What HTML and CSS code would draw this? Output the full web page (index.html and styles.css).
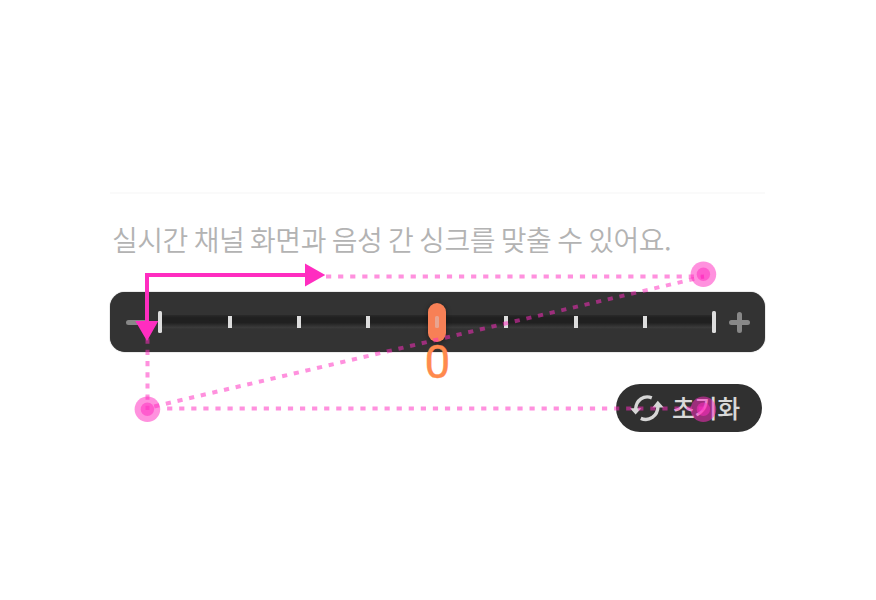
FILE: index.html
```html
<!DOCTYPE html>
<html lang="ko">
<head>
<meta charset="utf-8">
<title>싱크 조절</title>
<link rel="stylesheet" href="styles.css">
</head>
<body>
<main class="sync">
  <p class="desc">실시간 채널 화면과 음성 간 싱크를 맞출 수 있어요.</p>
  <div class="panel">
    <span class="minus"></span>
    <div class="track">
      <i class="tick end"></i><i class="tick"></i><i class="tick"></i><i class="tick"></i>
      <span class="handle"><i class="tick"></i></span>
      <i class="tick"></i><i class="tick"></i><i class="tick"></i><i class="tick end"></i>
    </div>
    <svg class="plus" width="21" height="21" viewBox="0 0 21 21" stroke="#888" stroke-width="5" stroke-linecap="round">
      <path d="M10.5 2.5V18.5M2.5 10.5H18.5"/>
    </svg>
  </div>
  <div class="value">0</div>
  <button class="reset">
    <svg width="34" height="28" viewBox="0 0 34 28" fill="none" stroke="#d6d6d6" stroke-width="3.4">
      <path d="M21.8 3.8C13.8 0.8 6.2 6 5.6 15"/>
      <path d="M10.8 24.4C19 28 27.6 22.2 28 12.5"/>
      <path d="M0 14.2H11.4L5.6 20.6Z M22.4 13.4L27.8 6.8L33.8 13.4Z" fill="#d6d6d6" stroke="none"/>
    </svg>
    <span>초기화</span>
  </button>
</main>
<svg class="flow" width="876" height="600" viewBox="0 0 876 600" fill="none">
  <g stroke="#ff2dc0" stroke-opacity=".52" stroke-width="4">
    <path d="M326 276.5H704" stroke-dasharray="5.2 6.89"/>
    <path d="M147.5 338.6V410" stroke-dasharray="5.2 6"/>
    <path d="M154.2 406.5L704 276.6" stroke-dasharray="5.2 6.75"/>
    <path d="M167.1 408.5H704" stroke-dasharray="5.2 6.88"/>
  </g>
  <g fill="#ff2dc0" fill-opacity=".52">
    <circle cx="703.4" cy="274.2" r="12.8"/><circle cx="703.4" cy="274.2" r="6.7"/>
    <circle cx="147.4" cy="409.2" r="12.8"/><circle cx="147.4" cy="409.2" r="6.7"/>
    <circle cx="703.4" cy="409.2" r="12.8"/><circle cx="703.4" cy="409.2" r="6.7"/>
  </g>
  <path d="M147 323V275H307" stroke="#ff2dc0" stroke-width="4"/>
  <path d="M305 263.5L325.3 275L305 286.5ZM135.3 321H158.3L147 341Z" fill="#ff2dc0"/>
</svg>
</body>
</html>
```
FILE: styles.css
```css
body {
  margin: 0;
  background: #fff;
  position: relative;
  width: 876px;
  height: 600px;
  overflow: hidden;
  font-family: "Noto Sans CJK KR", sans-serif;
}
.sync {
  display: flex;
  flex-direction: column;
  width: 655px;
  padding: 192px 0 0 110px;
}
.desc {
  margin: 0;
  height: 98px;
  border-top: 2px solid #fafafa;
  box-sizing: content-box;
  padding: 0 0 0 2px;
  line-height: 91px;
  font-size: 28px;
  font-weight: 350;
  letter-spacing: -0.45px;
  word-spacing: -1.65px;
  color: #b3b3b3;
  white-space: nowrap;
}
.panel {
  display: flex;
  align-items: center;
  box-sizing: border-box;
  width: 655px;
  height: 60px;
  padding: 0 15px 0 16px;
  border-radius: 15px;
  background: #333;
  box-shadow: 0 0 1px #333;
}
.minus {
  width: 22px;
  height: 5px;
  border-radius: 3px;
  background: #888;
}
.track {
  display: flex;
  flex: 1;
  align-items: center;
  justify-content: space-between;
  height: 14px;
  margin: 0 13px 0 10.4px;
  background: linear-gradient(#2a2a2a, #202020 20%, #202020 55%, #303030 75%, #3b3b3b 90%, #333);
}
.tick {
  width: 4px;
  height: 12px;
  background: #ddd;
}
.tick.end {
  height: 22px;
  border-radius: 1.5px;
}
.handle {
  display: flex;
  align-items: center;
  justify-content: center;
  width: 18px;
  height: 39px;
  margin: 0 -7px;
  border-radius: 9px;
  background: #f78056;
  box-shadow: 0 1px 5px #111a;
}
.handle .tick {
  border-radius: 1.5px;
  background: #e8a490;
}
.plus {
  flex: none;
}
.value {
  height: 32px;
  line-height: 21px;
  text-align: center;
  font-family: Roboto, sans-serif;
  font-size: 46px;
  color: #ff8a4d;
  -webkit-text-stroke: 0.3px #ff8a4d;
}
.reset {
  display: flex;
  align-items: center;
  align-self: flex-end;
  gap: 8px;
  box-sizing: border-box;
  width: 146px;
  height: 48px;
  margin-right: 3px;
  padding: 0 0 0 14px;
  border: 0;
  border-radius: 24px;
  background: #303030;
  color: #d8d8d8;
  font: 500 25px/46px "Noto Sans CJK KR", sans-serif;
  letter-spacing: -0.4px;
}
.reset span {
  padding-bottom: 2px;
}
.flow {
  position: absolute;
  top: 0;
  left: 0;
}
```
